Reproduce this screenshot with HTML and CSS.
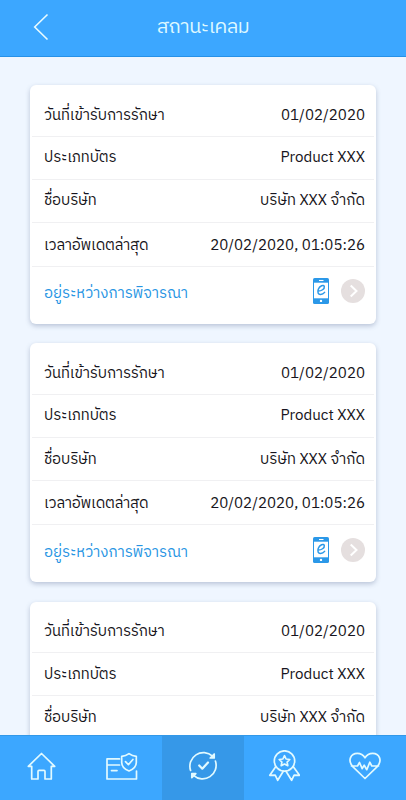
FILE: index.html
```
<!DOCTYPE html>
<html lang="th">
<head>
<meta charset="utf-8">
<meta name="viewport" content="width=device-width, initial-scale=1">
<title>สถานะเคลม</title>
<link rel="stylesheet" href="styles.css">
</head>
<body>
<svg class="defs" width="0" height="0" aria-hidden="true">
  <symbol id="phone" viewBox="0 0 16 26">
    <rect x="0" y="0" width="16" height="26" rx="1.6" fill="#2b98e8"/>
    <rect x="1" y="4.7" width="14" height="15.6" fill="#fff"/>
    <path d="M6 2.5h4.5" stroke="#fff" stroke-width="1.1"/>
    <circle cx="8" cy="22.900" r="1.2" fill="#fff"/>
    <path d="M5 13.100c3.500.1 6.700-2.200 6.300-4.500-.5-2.300-4.700-.8-6 2.600-1.200 3.300.1 5.400 2.200 5.300 1.700 0 3.100-.8 4.100-2.100" fill="none" stroke="#2b98e8" stroke-width="1.500" stroke-linecap="round"/>
  </symbol>
  <symbol id="next" viewBox="0 0 24 24">
    <circle cx="12" cy="12" r="12" fill="#e5dfdf"/>
    <path d="M9.700 6.600 15.500 12.100 9.700 17.600" fill="none" stroke="#fff" stroke-width="2"/>
  </symbol>
</svg>
<div class="app">
  <header class="header">
    <svg class="back" viewBox="0 0 16 28"><path d="M14.500 1.500 1.700 14 14.500 26.500"/></svg>
    <h1 class="title">สถานะเคลม</h1>
  </header>
  <main class="list">
    <section class="card">
      <div class="row first"><span class="label">วันที่เข้ารับการรักษา</span><span class="value">01/02/2020</span></div>
      <div class="row"><span class="label">ประเภทบัตร</span><span class="value">Product XXX</span></div>
      <div class="row"><span class="label">ชื่อบริษัท</span><span class="company">บริษัท XXX จำกัด</span></div>
      <div class="row last"><span class="label tight">เวลาอัพเดตล่าสุด</span><span class="value">20/02/2020, 01:05:26</span></div>
      <div class="status"><span class="state">อยู่ระหว่างการพิจารณา</span><svg class="phone"><use href="#phone"/></svg><svg class="next"><use href="#next"/></svg></div>
    </section>
    <section class="card">
      <div class="row first"><span class="label">วันที่เข้ารับการรักษา</span><span class="value">01/02/2020</span></div>
      <div class="row"><span class="label">ประเภทบัตร</span><span class="value">Product XXX</span></div>
      <div class="row"><span class="label">ชื่อบริษัท</span><span class="company">บริษัท XXX จำกัด</span></div>
      <div class="row last"><span class="label tight">เวลาอัพเดตล่าสุด</span><span class="value">20/02/2020, 01:05:26</span></div>
      <div class="status"><span class="state">อยู่ระหว่างการพิจารณา</span><svg class="phone"><use href="#phone"/></svg><svg class="next"><use href="#next"/></svg></div>
    </section>
    <section class="card">
      <div class="row first"><span class="label">วันที่เข้ารับการรักษา</span><span class="value">01/02/2020</span></div>
      <div class="row"><span class="label">ประเภทบัตร</span><span class="value">Product XXX</span></div>
      <div class="row"><span class="label">ชื่อบริษัท</span><span class="company">บริษัท XXX จำกัด</span></div>
    </section>
  </main>
  <nav class="nav">
    <a class="tab"><svg viewBox="0 0 32 32"><path d="M6.700 16.300H3.300L16.500 3.500 29.700 16.300h-3.400V29h-6.300v-7.600a1 1 0 0 0-1-1h-5a1 1 0 0 0-1 1V29H6.700z"/></svg></a>
    <a class="tab"><svg viewBox="0 0 32 32"><path d="M13.500 8.900H1V29h29.500v-8M1 15h12.500M5.500 20.600h5.500M23 3.600c2.300 1.700 4.500 2.500 7.300 2.700v6.200c0 4-2.800 6.700-7.300 8.500-4.500-1.800-7.300-4.500-7.300-8.500V6.300c2.800-.2 5-1 7.300-2.700zM19.500 11.700l2.900 3 4.500-5.200"/></svg></a>
    <a class="tab active"><svg viewBox="0 0 32 32"><path d="M25.500 6.200A13.500 13.500 0 0 0 3.600 20.500M6.500 25.300A13.500 13.500 0 0 0 28.400 11"/><path class="check" d="M12.200 15.500l3.100 3.200 5.700-6.200"/><path class="fill" d="M27.200 4v4h-4zM4.800 27.600v-4h4z"/></svg></a>
    <a class="tab"><svg viewBox="0 0 32 32"><circle cx="16.500" cy="11" r="10.200"/><path d="m16.500 5.700 1.600 3.300 3.700.5-2.700 2.600.7 3.600-3.300-1.700-3.300 1.700.7-3.600-2.700-2.600 3.700-.5zM7.500 17 1.800 25.300l5.400-.2 2.500 5.200 5.600-9M25.500 17l6 8.300-5.400-.2-2.500 5.200-5.600-9"/></svg></a>
    <a class="tab"><svg viewBox="0 0 32 32"><path d="M16 28.500 4 16.900C-2 10.200 2 3.300 8.300 3.300c3.500 0 6 1.600 7.700 4.500 1.700-2.900 4.200-4.500 7.700-4.500C30 3.300 34 10.200 28 16.900zM2.500 16h6l2-3.500 2.700 6.200 2-3.500 2.600 4.500 3-7.500 2 3.800h6.700"/></svg></a>
  </nav>
</div>
</body>
</html>
```
FILE: styles.css
```
* { box-sizing: border-box; }
body { margin: 0; background: #eff6ff; color: #171520; font-family: "IBM Plex Sans Thai", "Noto Sans Thai", "Noto Sans", Roboto, sans-serif; font-size: 15px; }
.defs { display: block; }
.app { height: 800px; display: flex; flex-direction: column; overflow: hidden; }
.header { flex: 0 0 57px; display: grid; grid-template-columns: 56px 1fr 56px; align-items: center; padding-bottom: 2px; background: #3ca7ff; border-bottom: 1px solid #2791e7; }
.back { width: 16px; height: 28px; margin-left: 33px; fill: none; stroke: #e9fbff; stroke-width: 1.6; }
.title { margin: 0; padding-top: 1px; color: #def8ff; font-size: 20px; letter-spacing: -.5px; font-weight: 400; line-height: 30px; text-align: center; }
.list { flex: 1 1 0; min-height: 0; overflow: hidden; display: flex; flex-direction: column; gap: 19.300px; padding: 28px 30px 0; }
.card { flex: none; height: 239px; background: #fff; border-radius: 6px; box-shadow: 0 2px 5px rgba(70, 90, 130, .32); }
.row { display: flex; justify-content: space-between; align-items: center; height: 43.200px; margin: 0 2px; padding: 1px 9px 0 12px; border-bottom: 1px solid #f0f0f2; line-height: 24px; white-space: nowrap; }
.label { font-size: 15px; letter-spacing: -.1px; }
.tight { letter-spacing: -.2px; }
.value { font-size: 15.100px; }
.first { height: 51.500px; padding-top: 11px; }
.last { height: 44px; padding-top: 3px; }
.status { display: flex; align-items: center; height: 49px; padding: 0 11px 0 14px; color: #2795e3; }
.state { flex: 1; padding-top: 5px; }
.phone { width: 16px; height: 26px; margin-right: 12px; }
.next { width: 24px; height: 24px; }
.nav { flex: 0 0 65px; display: grid; grid-template-columns: repeat(5, 1fr); background: #3ca7ff; border-top: 1px solid #3298e8; }
.tab { display: flex; justify-content: center; padding-top: 14px; }
.tab svg { width: 32px; height: 32px; fill: none; stroke: #e2faff; stroke-width: 1.700; stroke-linejoin: round; stroke-linecap: round; }
.tab .fill { fill: #e2faff; }
.tab .check { stroke-width: 2.200; }
.active { background: #3698e8; }
```
